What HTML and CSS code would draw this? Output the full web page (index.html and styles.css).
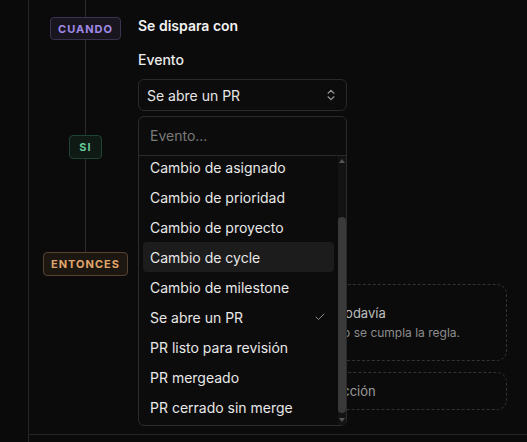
FILE: index.html
```html
<!DOCTYPE html>
<html lang="es">
<head>
    <meta charset="UTF-8">
    <title>Regla - Automatizaciones</title>
    <link rel="stylesheet" href="styles.css">
</head>
<body>
    <div class="app">
        <div class="rail"></div>
        <div class="main">
            <div class="flow">
                <div class="timeline">
                    <div class="seg seg-top"></div>
                    <span class="badge badge-when">CUANDO</span>
                    <div class="seg seg-mid"></div>
                    <span class="badge badge-if">SI</span>
                    <div class="seg seg-low"></div>
                    <span class="badge badge-then">ENTONCES</span>
                </div>
                <div class="steps">
                    <div class="step-title">Se dispara con</div>
                    <div class="field-label">Evento</div>
                    <div class="select-wrap">
                        <button class="select">
                            <span>Se abre un PR</span>
                            <svg width="14" height="14" viewBox="0 0 24 24" fill="none" stroke="currentColor" stroke-width="2" stroke-linecap="round" stroke-linejoin="round"><path d="m7 15 5 5 5-5"/><path d="m7 9 5-5 5 5"/></svg>
                        </button>
                        <div class="popup">
                            <div class="popup-search">Evento...</div>
                            <div class="popup-body">
                                <div class="popup-list">
                                    <div class="option">Cambio de asignado</div>
                                    <div class="option">Cambio de prioridad</div>
                                    <div class="option">Cambio de proyecto</div>
                                    <div class="option active">Cambio de cycle</div>
                                    <div class="option">Cambio de milestone</div>
                                    <div class="option selected">
                                        <span>Se abre un PR</span>
                                        <svg width="12" height="12" viewBox="0 0 24 24" fill="none" stroke="currentColor" stroke-width="2" stroke-linecap="round" stroke-linejoin="round"><path d="M20 6 9 17l-5-5"/></svg>
                                    </div>
                                    <div class="option">PR listo para revisión</div>
                                    <div class="option">PR mergeado</div>
                                    <div class="option">PR cerrado sin merge</div>
                                </div>
                                <div class="scrollbar">
                                    <div class="sb-arrow up"></div>
                                    <div class="sb-track"><div class="sb-thumb"></div></div>
                                    <div class="sb-arrow down"></div>
                                </div>
                            </div>
                        </div>
                    </div>
                    <div class="actions">
                        <div class="empty-box">
                            <div class="empty-title">Sin acciones todavía</div>
                            <div class="empty-desc">Añade acciones para cuando se cumpla la regla.</div>
                        </div>
                        <button class="add-box">
                            <svg width="14" height="14" viewBox="0 0 24 24" fill="none" stroke="currentColor" stroke-width="2" stroke-linecap="round"><path d="M12 5v14M5 12h14"/></svg>
                            <span>Añadir acción</span>
                        </button>
                    </div>
                </div>
            </div>
            <div class="footer"></div>
        </div>
    </div>
</body>
</html>
```

FILE: styles.css
```css
body {
    margin: 0;
    background: #0b0b0b;
    color: #ececec;
    font-family: Inter, "Noto Sans", sans-serif;
    font-size: 14px;
}
.app {
    display: flex;
    height: 442px;
    overflow: hidden;
}
.rail {
    width: 28px;
    border-right: 1px solid #262626;
    background: #0a0a0a;
}
.main {
    flex: 1;
    display: flex;
    flex-direction: column;
}
.flow {
    height: 434px;
    display: grid;
    grid-template-columns: 109px 1fr;
}
.footer {
    flex: 1;
    border-top: 1px solid #262626;
}

/* timeline */
.timeline {
    display: flex;
    flex-direction: column;
    align-items: center;
    padding-left: 4px;
}
.seg {
    width: 1px;
    background: #2c2c2c;
}
.seg-top { height: 17px; }
.seg-mid { height: 95px; }
.seg-low { height: 93px; }
.badge {
    box-sizing: border-box;
    height: 24px;
    display: flex;
    align-items: center;
    padding: 0 7px;
    border-radius: 4px;
    border: 1px solid;
    font-size: 11px;
    font-weight: 700;
    letter-spacing: 1px;
}
.badge-when {
    height: 23px;
    color: #a08ae6;
    background: #18151f;
    border-color: #3a3350;
}
.badge-if {
    padding: 0 9px;
    color: #66c897;
    background: #0f1a15;
    border-color: #1f4334;
}
.badge-then {
    color: #e0a66b;
    background: #1d1712;
    border-color: #574230;
}

/* steps */
.steps {
    padding: 16px 20px 0 0;
}
.step-title {
    font-weight: 600;
    line-height: 20px;
    color: #f2f2f2;
}
.field-label {
    margin-top: 14px;
    font-weight: 500;
    line-height: 20px;
    color: #ececec;
}
.select-wrap {
    position: relative;
    width: 209px;
    margin-top: 9px;
}
.select {
    box-sizing: border-box;
    width: 100%;
    height: 32px;
    display: flex;
    align-items: center;
    justify-content: space-between;
    padding: 0 8px 0 8px;
    background: #0c0c0c;
    border: 1px solid #2a2a2a;
    border-radius: 6px;
    color: #e6e6e6;
    font-family: inherit;
    font-size: 14px;
}
.select svg {
    color: #9a9a9a;
}

/* dropdown */
.popup {
    position: absolute;
    top: calc(100% + 5px);
    left: 0;
    right: 0;
    height: 310px;
    box-sizing: border-box;
    display: flex;
    flex-direction: column;
    background: #0c0c0c;
    border: 1px solid #2b2b2b;
    border-radius: 6px;
    z-index: 5;
}
.popup-search {
    height: 38px;
    line-height: 38px;
    padding-left: 11px;
    color: #7a7a7a;
    border-bottom: 1px solid #2a2a2a;
}
.popup-body {
    flex: 1;
    display: flex;
    overflow: hidden;
}
.popup-list {
    flex: 1;
    padding: 0 4px;
    margin-top: -4px;
}
.option {
    height: 30px;
    display: flex;
    align-items: center;
    justify-content: space-between;
    padding: 0 8px 0 7px;
    border-radius: 4px;
    color: #e8e8e8;
}
.option.active {
    background: #1c1c1c;
}
.option svg {
    color: #8a8a8a;
}
.scrollbar {
    width: 8px;
    display: flex;
    flex-direction: column;
    background: #131313;
}
.sb-arrow {
    height: 10px;
    display: flex;
    align-items: center;
    justify-content: center;
}
.sb-arrow::before {
    content: "";
    border-left: 3px solid transparent;
    border-right: 3px solid transparent;
}
.sb-arrow.up::before {
    border-bottom: 4px solid #555;
}
.sb-arrow.down::before {
    border-top: 4px solid #555;
}
.sb-track {
    flex: 1;
    display: flex;
    flex-direction: column;
    padding: 51px 0 2px;
}
.sb-thumb {
    flex: 1;
    background: #3a3a3a;
    border-radius: 4px;
}

/* actions */
.actions {
    margin-top: 173px;
    display: flex;
    flex-direction: column;
    gap: 11px;
}
.empty-box {
    height: 77px;
    box-sizing: border-box;
    padding-top: 18px;
    border: 1px dashed #333;
    border-radius: 10px;
    text-align: center;
}
.empty-title {
    font-size: 13px;
    line-height: 20px;
    color: #bdbdbd;
}
.empty-desc {
    margin-top: 1px;
    font-size: 12px;
    line-height: 18px;
    color: #8c8c8c;
}
.add-box {
    height: 38px;
    display: flex;
    align-items: center;
    justify-content: center;
    gap: 8px;
    background: transparent;
    border: 1px dashed #333;
    border-radius: 10px;
    color: #9a9a9a;
    font-family: inherit;
    font-size: 13px;
}
```
